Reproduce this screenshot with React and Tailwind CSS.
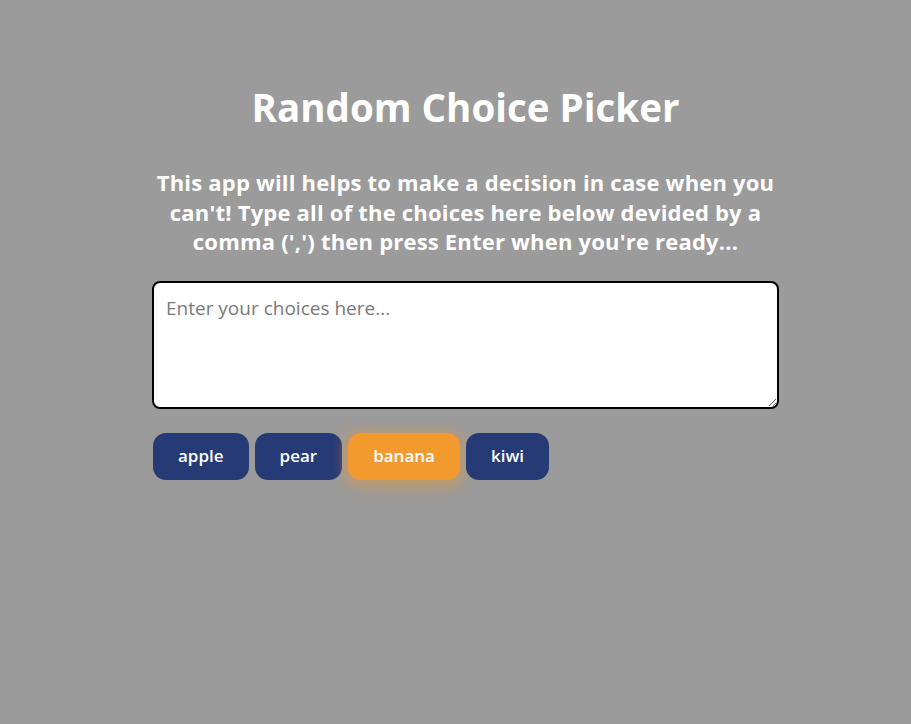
export default function App() {
  const tags = [
    { t: "apple", hl: false },
    { t: "pear", hl: false },
    { t: "banana", hl: true },
    { t: "kiwi", hl: false },
  ];
  return (
    <div
      className="min-h-[724px] w-full bg-[#9b9b9b] flex justify-center pl-[20px]"
      style={{ fontFamily: "'Open Sans', 'Noto Sans', sans-serif" }}
    >
      <div className="w-[627px] flex flex-col items-stretch pt-[82px]">
        <h1 className="text-center text-white font-bold text-[38.5px] leading-[50px]">
          Random Choice Picker
        </h1>
        <p className="mt-[36px] text-center text-white font-bold text-[22px] leading-[29.5px] tracking-[0.2px]">
          This app will helps to make a decision in case when you can't! Type all of the choices here below devided by a comma (',') then press Enter when you're ready...
        </p>
        <textarea
          className="mt-[24px] h-[128px] w-full bg-white rounded-[8px] border-2 border-black p-[12px] text-[19px] leading-[26px] placeholder:text-[#7a7a7a] outline-none"
          style={{ fontFamily: "'Open Sans', 'Noto Sans', sans-serif" }}
          placeholder="Enter your choices here..."
        />
        <div className="mt-[24px] flex gap-[6px] pl-[1px]">
          {tags.map((x) => (
            <span
              key={x.t}
              className={
                x.hl
                  ? "h-[47px] px-[25px] rounded-[13px] bg-[#f39a2e] text-white font-semibold text-[17px] flex items-center shadow-[0_3px_14px_4px_rgba(243,154,46,0.45)]"
                  : "h-[47px] px-[25px] rounded-[13px] bg-[#263a76] text-white font-semibold text-[17px] flex items-center"
              }
            >
              {x.t}
            </span>
          ))}
        </div>
      </div>
    </div>
  );
}
